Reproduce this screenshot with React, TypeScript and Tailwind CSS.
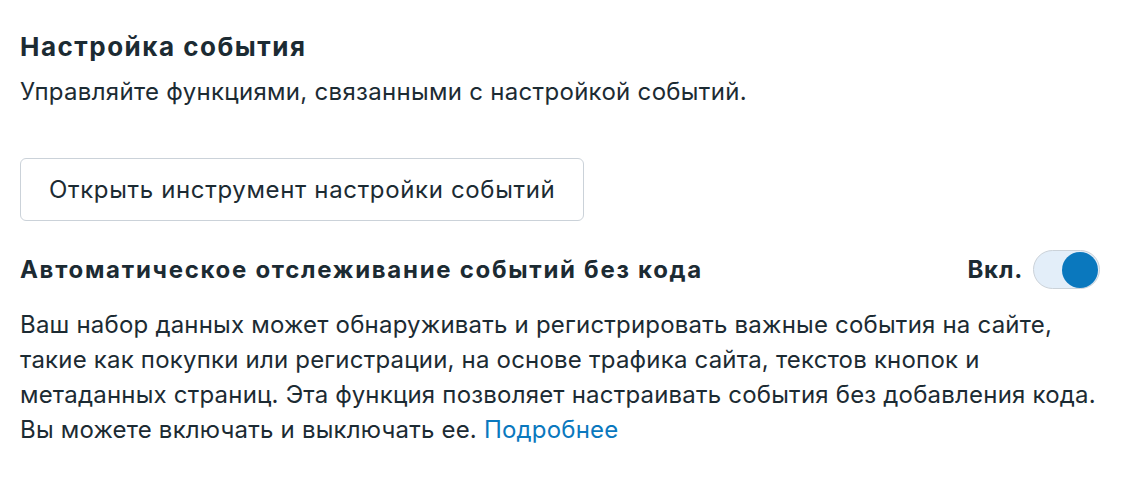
export default function App() {
  return (
    <div className="min-h-screen bg-white px-5 pt-[30px] text-[#1c2b33]" style={{ fontFamily: 'Inter, "Noto Sans", sans-serif' }}>
      <div className="w-[1080px]">
        <h2 className="text-[26px] font-bold leading-[34px] tracking-[1.5px]">Настройка события</h2>
        <p className="mt-[13px] text-[24px] leading-[30px] tracking-[0.3px]">Управляйте функциями, связанными с настройкой событий.</p>
        <button className="mt-[51px] flex h-[63px] items-center rounded-[6px] border border-[#cbd2d9] px-[28px] text-[24px] tracking-[0.65px] text-[#1c2b33]">
          Открыть инструмент настройки событий
        </button>
        <div className="mt-[29px] flex items-center justify-between">
          <h3 className="text-[24px] font-bold leading-[34px] tracking-[1.7px]">Автоматическое отслеживание событий без кода</h3>
          <div className="flex items-center gap-[10px]">
            <span className="text-[24px] font-bold tracking-[0.8px]">Вкл.</span>
            <div className="flex h-[39px] w-[67px] items-center justify-end rounded-full border border-[#cbd2d9] bg-[#e3eef9] px-[1px]">
              <div className="h-[36px] w-[36px] rounded-full bg-[#0a78be]"></div>
            </div>
          </div>
        </div>
        <p className="mt-[18px] w-[1098px] text-[24px] leading-[35px] tracking-[0.2px]">
          Ваш набор данных может обнаруживать и регистрировать важные события на сайте, такие как покупки или регистрации, на основе трафика сайта, текстов кнопок и метаданных страниц. Эта функция позволяет настраивать события без добавления кода. Вы можете включать и выключать ее.{' '}
          <a className="text-[#0a78be]">Подробнее</a>
        </p>
      </div>
    </div>
  );
}
